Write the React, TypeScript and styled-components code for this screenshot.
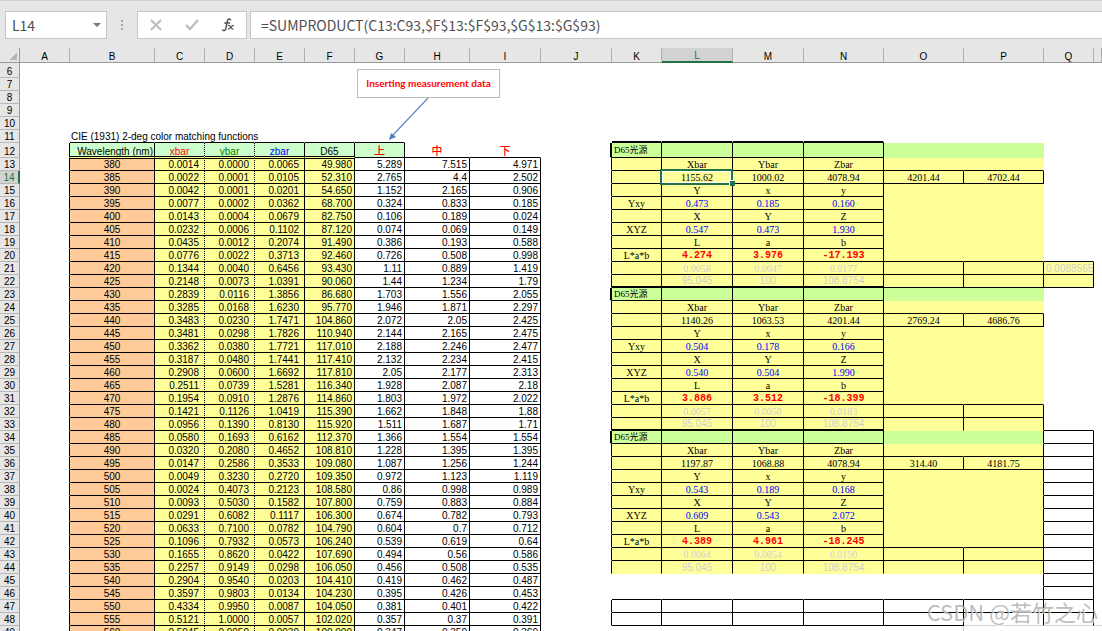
import React from 'react';
import styled, { createGlobalStyle, css } from 'styled-components';

const YELLOW = '#ffff99';
const ORANGE = '#ffcc99';
const MINT = '#ccffcc';
const LIME = '#ccff99';
const ACCENT = '#217346';
const SANS = "'Liberation Sans', 'Noto Sans CJK JP', sans-serif";
const SERIF = "'Liberation Serif', 'Noto Sans CJK SC', serif";

const GlobalStyle = createGlobalStyle`
  *, *::before, *::after { box-sizing: border-box; }
  body { margin: 0; background: #fff; color: #000; font-family: ${SANS}; }
`;

const Page = styled.div`
  display: flex;
  flex-direction: column;
  height: 100vh;
  overflow: hidden;
  position: relative;
`;

const FormulaBar = styled.header`
  display: flex;
  flex: none;
  align-items: flex-start;
  height: 48px;
  padding: 10px 0 0 5px;
  background: #e6e6e6;
  border-top: 1px solid #d0d0d0;
`;

const barBox = css`
  display: flex;
  align-items: center;
  height: 28px;
  background: #fff;
  border: 1px solid #c6c6c6;
`;

const NameBox = styled.div`
  ${barBox}
  width: 102px;
`;

const BarInput = styled.input`
  flex: 1;
  min-width: 0;
  height: 100%;
  padding: 0;
  border: 0;
  outline: 0;
  background: transparent;
  color: #505050;
  font: 14px 'Noto Sans CJK SC', sans-serif;
`;

const NameInput = styled(BarInput)`
  padding-left: 6px;
`;

const BarButton = styled.button`
  display: flex;
  align-items: center;
  justify-content: center;
  width: 36px;
  height: 100%;
  padding: 0;
  border: 0;
  background: transparent;
`;

const DropButton = styled(BarButton)`
  width: 18px;
`;

const Grip = styled.div`
  display: grid;
  gap: 2px;
  width: 30px;
  padding-top: 9px;
  justify-content: center;
`;

const GripDot = styled.i`
  width: 2px;
  height: 2px;
  background: #a6a6a6;
`;

const Tools = styled.div`
  ${barBox}
  width: 110px;
  margin-right: 3px;
`;

const FormulaBox = styled.div`
  ${barBox}
  flex: 1;
  border-right: 0;
  padding-left: 10px;
`;

const Sheet = styled.main`
  flex: 1;
  min-height: 0;
  overflow: hidden;
  position: relative;
`;

const Grid = styled.table`
  width: 100%;
  table-layout: fixed;
  border-collapse: separate;
  border-spacing: 0;
`;

const Col = styled.col<{ $w?: number }>`
  width: ${p => (p.$w ? `${p.$w}px` : 'auto')};
`;

const ColHead = styled.th<{ $active?: boolean }>`
  height: 15px;
  padding: 2px 0 0;
  background: ${p => (p.$active ? '#d2d2d2' : '#e6e6e6')};
  color: ${p => (p.$active ? ACCENT : '#000')};
  border-right: 1px solid #b0b0b0;
  border-bottom: ${p => (p.$active ? `2px solid ${ACCENT}` : '1px solid #999')};
  font: 10px/11px ${SANS};
  text-align: center;
`;

const Corner = styled(ColHead)`
  border-right-color: #999;
`;

const CornerMark = styled.i`
  display: block;
  width: 7px;
  height: 7px;
  margin-left: 10px;
  background: linear-gradient(135deg, transparent 50%, #b4b4b4 50%);
`;

const RowHead = styled.th<{ $active?: boolean }>`
  padding: 0;
  background: ${p => (p.$active ? '#d2d2d2' : '#e6e6e6')};
  color: ${p => (p.$active ? ACCENT : '#000')};
  border-right: ${p => (p.$active ? `2px solid ${ACCENT}` : '1px solid #999')};
  border-bottom: 1px solid #b8b8b8;
  font: 10px/11px ${SANS};
  text-align: center;
  vertical-align: bottom;
`;

const Row = styled.tr<{ $h: number }>`
  height: ${p => p.$h}px;
`;

type Look = 'plain' | 'mono' | 'label' | 'strong' | 'cjk';

const looks = {
  plain: css`font: 10px/11px ${SANS};`,
  mono: css`font: 10px/11px ${SERIF};`,
  label: css`font: 9px/11px ${SERIF}; vertical-align: middle;`,
  strong: css`font: bold 10px/11px 'Liberation Mono', monospace;`,
  cjk: css`font: 500 11px/11px 'Noto Sans CJK SC', sans-serif; vertical-align: middle;`,
};

interface CellStyle {
  $bg?: string;
  $color?: string;
  $right?: string;
  $bottom?: string;
  $align?: string;
  $pad?: number;
  $look?: Look;
  $shadow?: string;
}

const Cell = styled.td<CellStyle>`
  position: relative;
  padding: 0 ${p => p.$pad ?? 0}px;
  background: ${p => p.$bg ?? 'transparent'};
  color: ${p => p.$color ?? '#000'};
  border-right: ${p => p.$right ?? '1px solid transparent'};
  border-bottom: ${p => p.$bottom ?? '1px solid transparent'};
  box-shadow: ${p => p.$shadow ?? 'none'};
  text-align: ${p => p.$align ?? 'center'};
  vertical-align: bottom;
  white-space: nowrap;
  ${p => looks[p.$look ?? 'plain']}
`;

const Selection = styled.span`
  position: absolute;
  inset: -2px -1px -2px -2px;
  border: 2px solid ${ACCENT};
  box-shadow: inset 0 0 0 1px #fff;
  z-index: 1;

  &::after {
    content: '';
    position: absolute;
    right: -4px;
    bottom: -3px;
    width: 6px;
    height: 6px;
    background: ${ACCENT};
    border: solid #fff;
    border-width: 1px 0 0 1px;
  }
`;

const Callout = styled.div`
  position: absolute;
  top: 21px;
  left: 357px;
  width: 143px;
  padding: 8px 0;
  border: 1px solid #bcbcbc;
  background: #fff;
  color: #f00;
  font: bold 10px/11px Lato, sans-serif;
  text-align: center;
`;

const Arrow = styled.svg`
  position: absolute;
  top: 50px;
  left: 385px;
`;

const Watermark = styled.div`
  position: absolute;
  right: 4px;
  bottom: 4px;
  color: rgba(150, 150, 150, 0.65);
  font: 22px/32px 'Noto Sans CJK SC', sans-serif;
  text-shadow: 1px 1px 0 rgba(255, 255, 255, 0.7);
`;

const columns: [string, number?][] = [
  ['A', 50], ['B', 85], ['C', 50], ['D', 50], ['E', 50], ['F', 50], ['G', 50], ['H', 65], ['I', 71],
  ['J', 71], ['K', 50], ['L', 71], ['M', 71], ['N', 80], ['O', 80], ['P', 80], ['Q', 50], [''],
];

const measurements = `
380 0.0014 0.0000 0.0065 49.980 5.289 7.515 4.971
385 0.0022 0.0001 0.0105 52.310 2.765 4.4 2.502
390 0.0042 0.0001 0.0201 54.650 1.152 2.165 0.906
395 0.0077 0.0002 0.0362 68.700 0.324 0.833 0.185
400 0.0143 0.0004 0.0679 82.750 0.106 0.189 0.024
405 0.0232 0.0006 0.1102 87.120 0.074 0.069 0.149
410 0.0435 0.0012 0.2074 91.490 0.386 0.193 0.588
415 0.0776 0.0022 0.3713 92.460 0.726 0.508 0.998
420 0.1344 0.0040 0.6456 93.430 1.11 0.889 1.419
425 0.2148 0.0073 1.0391 90.060 1.44 1.234 1.79
430 0.2839 0.0116 1.3856 86.680 1.703 1.556 2.055
435 0.3285 0.0168 1.6230 95.770 1.946 1.871 2.297
440 0.3483 0.0230 1.7471 104.860 2.072 2.05 2.425
445 0.3481 0.0298 1.7826 110.940 2.144 2.165 2.475
450 0.3362 0.0380 1.7721 117.010 2.188 2.246 2.477
455 0.3187 0.0480 1.7441 117.410 2.132 2.234 2.415
460 0.2908 0.0600 1.6692 117.810 2.05 2.177 2.313
465 0.2511 0.0739 1.5281 116.340 1.928 2.087 2.18
470 0.1954 0.0910 1.2876 114.860 1.803 1.972 2.022
475 0.1421 0.1126 1.0419 115.390 1.662 1.848 1.88
480 0.0956 0.1390 0.8130 115.920 1.511 1.687 1.71
485 0.0580 0.1693 0.6162 112.370 1.366 1.554 1.554
490 0.0320 0.2080 0.4652 108.810 1.228 1.395 1.395
495 0.0147 0.2586 0.3533 109.080 1.087 1.256 1.244
500 0.0049 0.3230 0.2720 109.350 0.972 1.123 1.119
505 0.0024 0.4073 0.2123 108.580 0.86 0.998 0.989
510 0.0093 0.5030 0.1582 107.800 0.759 0.883 0.884
515 0.0291 0.6082 0.1117 106.300 0.674 0.782 0.793
520 0.0633 0.7100 0.0782 104.790 0.604 0.7 0.712
525 0.1096 0.7932 0.0573 106.240 0.539 0.619 0.64
530 0.1655 0.8620 0.0422 107.690 0.494 0.56 0.586
535 0.2257 0.9149 0.0298 106.050 0.456 0.508 0.535
540 0.2904 0.9540 0.0203 104.410 0.419 0.462 0.487
545 0.3597 0.9803 0.0134 104.230 0.395 0.426 0.453
550 0.4334 0.9950 0.0087 104.050 0.381 0.401 0.422
555 0.5121 1.0000 0.0057 102.020 0.357 0.37 0.391
560 0.5945 0.9950 0.0039 100.000 0.347 0.350 0.369
`.trim().split('\n').map(line => line.split(' '));

interface Block { start: number; rows: string[][] }

const makeBlock = (start: number, sums: string[], yxy: string[], xyz: string[], lab: string[], ratio: string[]): Block => ({
  start,
  rows: [
    ['D65光源'],
    ['', 'Xbar', 'Ybar', 'Zbar'],
    ['', ...sums],
    ['', 'Y', 'x', 'y'],
    ['Yxy', ...yxy],
    ['', 'X', 'Y', 'Z'],
    ['XYZ', ...xyz],
    ['', 'L', 'a', 'b'],
    ['L*a*b', ...lab],
    ['', ...ratio],
    ['', '95.045', '100', '108.8754'],
  ],
});

const blocks: Block[] = [
  makeBlock(12, ['1155.62', '1000.02', '4078.94', '4201.44', '4702.44'], ['0.473', '0.185', '0.160'],
    ['0.547', '0.473', '1.930'], ['4.274', '3.976', '-17.193'], ['0.0058', '0.0047', '0.0177']),
  makeBlock(23, ['1140.26', '1063.53', '4201.44', '2769.24', '4686.76'], ['0.504', '0.178', '0.166'],
    ['0.540', '0.504', '1.990'], ['3.886', '3.512', '-18.399'], ['0.0057', '0.0050', '0.0183']),
  makeBlock(34, ['1197.87', '1068.88', '4078.94', '314.40', '4181.75'], ['0.543', '0.189', '0.168'],
    ['0.609', '0.543', '2.072'], ['4.389', '4.961', '-18.245'], ['0.0064', '0.0054', '0.0190']),
];

const LINE = '1px solid #000';
const THICK = '2px solid #000';
const DOTTED = '1px dotted #000';
const FAINT = '1px solid #d4d4d4';

/* Columns B to I: the colour matching functions and the measured spectra. */
function leftCell(row: number, c: string): [string, CellStyle] {
  const i = 'BCDEFGHI'.indexOf(c);
  if (row === 11) return [c === 'B' ? 'CIE (1931) 2-deg color matching functions' : '', {
    $align: 'left', $pad: c === 'B' ? 1 : 0, $bottom: i <= 5 ? LINE : undefined }];
  if (row === 12) {
    const text = ['Wavelength (nm)', 'xbar', 'ybar', 'zbar', 'D65', '上', '中', '下'][i];
    const color = ['#000', '#f00', '#008000', '#00f', '#000', '#f00', '#f00', '#f00'][i];
    const right = [LINE, DOTTED, DOTTED, LINE, LINE, LINE, undefined, undefined][i];
    return [text, {
      $bg: i <= 5 ? MINT : undefined, $color: color, $right: right, $pad: i === 0 ? 1 : 0,
      $align: i === 0 ? 'right' : 'center', $look: i > 4 ? 'cjk' : 'plain',
      $bottom: i <= 4 ? `1px solid ${YELLOW}` : LINE, $shadow: i <= 4 ? 'inset 0 -1px #000' : undefined }];
  }
  if (row < 13) return ['', {}];
  return [measurements[row - 13]?.[i] ?? '', {
    $bg: i === 0 ? ORANGE : i <= 4 ? YELLOW : undefined,
    $right: i === 1 || i === 2 ? DOTTED : LINE,
    $bottom: LINE,
    $align: i === 0 ? 'center' : 'right',
    $pad: i === 0 ? 0 : i <= 3 ? 5 : 2,
    $shadow: row === 13 && i <= 4 ? 'inset 0 1px #000' : undefined }];
}

/* Columns K to Q: the three result blocks and the empty ruled cells around them. */
function rightCell(row: number, c: string): [string, CellStyle] {
  const i = 'KLMNOPQ'.indexOf(c);
  if (row === 11) return ['', { $bottom: i <= 3 ? THICK : undefined }];
  const block = blocks.find(b => row >= b.start && row < b.start + 11);
  if (i === 6) {
    const filled = row === 21 || row === 22;
    const ruled = filled || row >= 34;
    return [row === 21 ? '0.0088565' : '', {
      $bg: filled ? YELLOW : undefined, $color: '#d0d0d0', $align: 'right', $pad: 2,
      $right: ruled && row < 49 ? LINE : undefined,
      $bottom: row === 48 ? FAINT : (filled || row === 20 || (row >= 33 && row < 48)) ? LINE : undefined }];
  }
  if (!block) {
    const ruled = row === 47 || row === 48;
    return ['', {
      $right: ruled || (i === 5 && row > 44 && row < 49) ? LINE : row === 49 && i === 4 ? FAINT : undefined,
      $bottom: row === 48 && i === 5 ? FAINT : ruled || row === 46 ? LINE : undefined }];
  }
  const n = row - block.start;
  const base: CellStyle = { $bg: n === 0 ? LIME : YELLOW };
  const text = block.rows[n][i] ?? '';
  if (i > 3) {
    const boxed = n === 2 || n > 8;
    return [text, { ...base, $look: 'mono',
      $right: (boxed || (i === 5 && block.start === 34)) ? LINE : undefined,
      $bottom: n === 1 || n === 2 || n === 8 || n === 9 || row === 22 ? LINE : undefined }];
  }
  const blue = i > 0 && (n === 4 || n === 6);
  return [text, { ...base,
    $look: n === 0 ? 'label' : n === 8 && i > 0 ? 'strong' : n === 10 ? 'plain' : 'mono',
    $align: n === 0 ? 'left' : 'center',
    $pad: n === 0 ? 2 : 0,
    $color: blue ? '#00f' : n === 8 && i > 0 ? '#f00' : n > 8 ? '#d0d0d0' : '#000',
    $right: LINE,
    $bottom: n < 10 ? LINE : row === 44 ? undefined : THICK }];
}

function cellFor(row: number, c: string): [string, CellStyle] {
  if (c === 'A') return ['', { $right: row >= 12 ? LINE : undefined }];
  if (c === 'J') {
    const titled = row === 12 || row === 23 || row === 34;
    return ['', { $right: titled ? THICK : (row >= 12 && row <= 44) || row === 47 || row === 48 ? LINE : undefined }];
  }
  if (c === '') return ['', { $bottom: row === 48 ? FAINT : undefined, $right: '0' }];
  if (c >= 'K') return rightCell(row, c);
  return leftCell(row, c);
}

const rowNumbers = Array.from({ length: 44 }, (_, k) => k + 6);

export default function App() {
  return (
    <Page>
      <GlobalStyle />
      <FormulaBar>
        <NameBox>
          <NameInput aria-label="Name box" defaultValue="L14" />
          <DropButton aria-label="Choose a name">
            <svg width="8" height="4" viewBox="0 0 8 4"><path d="M0 0h8L4 4z" fill="#777" /></svg>
          </DropButton>
        </NameBox>
        <Grip><GripDot /><GripDot /><GripDot /></Grip>
        <Tools>
          <BarButton aria-label="Cancel">
            <svg width="12" height="12" viewBox="0 0 12 12"><path d="M1 1l10 10M11 1L1 11" stroke="#bdbdbd" strokeWidth="2" fill="none" /></svg>
          </BarButton>
          <BarButton aria-label="Enter">
            <svg width="14" height="12" viewBox="0 0 14 12"><path d="M1 6l4 4 8-9" stroke="#bdbdbd" strokeWidth="2.4" fill="none" /></svg>
          </BarButton>
          <BarButton aria-label="Insert function">
            <svg width="13" height="14" viewBox="0 0 13 14" fill="none" stroke="#555" strokeLinecap="round">
              <path d="M8.5 1.8C7 .3 5.8 1.2 5.4 3L3.8 10.5c-.4 2-1.6 2.6-3 1.6M2.8 5h4.8" strokeWidth="1.5" />
              <path d="M6.5 7.5c2-.8 2 4 4.5 3.6M11.3 7.4c-1.6 0-3.2 3.6-5 3.7" strokeWidth="1.3" />
            </svg>
          </BarButton>
        </Tools>
        <FormulaBox>
          <BarInput aria-label="Formula" defaultValue="=SUMPRODUCT(C13:C93,$F$13:$F$93,$G$13:$G$93)" />
        </FormulaBox>
      </FormulaBar>
      <Sheet>
        <Grid>
          <colgroup>
            <Col $w={20} />
            {columns.map(([name, width]) => <Col key={name} $w={width} />)}
          </colgroup>
          <thead>
            <Row $h={15}>
              <Corner><CornerMark /></Corner>
              {columns.map(([name]) => <ColHead key={name} scope="col" $active={name === 'L'}>{name}</ColHead>)}
            </Row>
          </thead>
          <tbody>
            {rowNumbers.map(row => (
              <Row key={row} $h={row === 6 || row === 12 ? 15 : 13}>
                <RowHead scope="row" $active={row === 14}>{row}</RowHead>
                {columns.map(([name]) => {
                  const [text, style] = cellFor(row, name);
                  return (
                    <Cell key={name} {...style}>
                      {text}
                      {row === 14 && name === 'L' && <Selection />}
                    </Cell>
                  );
                })}
              </Row>
            ))}
          </tbody>
        </Grid>
        <Callout>Inserting measurement data</Callout>
        <Arrow width="46" height="44" viewBox="0 0 46 44">
          <path d="M43 0L8 37" stroke="#5b88c0" strokeWidth="1.2" />
          <path d="M4 42l2-7 5 4z" fill="#4f81bd" />
        </Arrow>
      </Sheet>
      <Watermark>CSDN @若竹之心</Watermark>
    </Page>
  );
}
